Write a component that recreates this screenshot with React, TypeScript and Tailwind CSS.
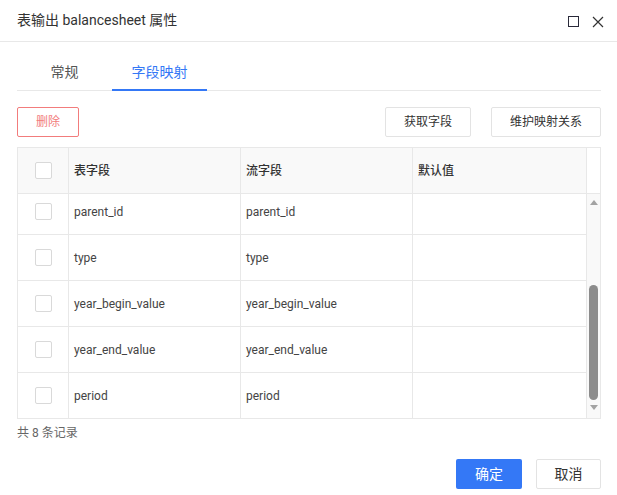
import React from "react";

const rows = [
  { table: "parent_id", stream: "parent_id" },
  { table: "type", stream: "type" },
  { table: "year_begin_value", stream: "year_begin_value" },
  { table: "year_end_value", stream: "year_end_value" },
  { table: "period", stream: "period" },
];

function Checkbox() {
  return <div className="w-[17px] h-[17px] rounded-[2px] border border-[#d9d9d9] bg-white" />;
}

export default function App() {
  return (
    <div
      className="w-[617px] h-[495px] bg-white text-[#333] overflow-hidden"
      style={{ fontFamily: "Roboto, 'Noto Sans CJK SC', sans-serif" }}
    >
      {/* title bar */}
      <div className="h-[42px] border-b border-[#e8e8e8] flex items-center pl-[17px] pr-[13px]">
        <span className="text-[14px] text-[#333]">表输出 balancesheet 属性</span>
        <div className="ml-auto flex items-center gap-[13px] mt-[2px]">
          <div className="w-[11px] h-[11px] border-[1.5px] border-[#2a2a3a]" />
          <svg width="12" height="12" viewBox="0 0 12 12">
            <path d="M1 1L11 11M11 1L1 11" stroke="#333" strokeWidth="1.2" />
          </svg>
        </div>
      </div>

      <div className="px-[17px]">
        {/* tabs */}
        <div className="flex w-[584px] border-b border-[#e8e8e8]">
          <div className="w-[95px] pt-[20px] pb-[8px] leading-[20px] text-[14px] text-center text-[#555]">常规</div>
          <div className="w-[95px] pt-[20px] pb-[7px] leading-[20px] text-[14px] text-center text-[#3478f6] border-b-2 border-[#3478f6] -mb-px">
            字段映射
          </div>
        </div>

        {/* actions */}
        <div className="flex w-[584px] mt-[16px] text-[12px]">
          <button className="h-[30px] px-[18px] border border-[#f27c7c] text-[#f27c7c] rounded-[2px] bg-white">删除</button>
          <button className="ml-auto h-[30px] px-[18px] border border-[#e3e3e3] rounded-[2px] bg-white text-[#333]">获取字段</button>
          <button className="ml-[20px] h-[30px] px-[18px] border border-[#e3e3e3] rounded-[2px] bg-white text-[#333]">维护映射关系</button>
        </div>

        {/* table */}
        <div className="mt-[10px] w-[584px] border border-[#e8e8e8] text-[12px]">
          <div className="flex h-[46px] border-b border-[#e8e8e8]">
            <div className="w-[51px] border-r border-[#e8e8e8] bg-[#f9f9f9] flex items-center justify-center">
              <Checkbox />
            </div>
            <div className="w-[172px] border-r border-[#e8e8e8] bg-[#f9f9f9] flex items-center pl-[5px] font-medium text-[#333]">表字段</div>
            <div className="w-[172px] border-r border-[#e8e8e8] bg-[#f9f9f9] flex items-center pl-[5px] font-medium text-[#333]">流字段</div>
            <div className="w-[174px] border-r border-[#e8e8e8] bg-[#f9f9f9] flex items-center pl-[5px] font-medium text-[#333]">默认值</div>
            <div className="flex-1 bg-white" />
          </div>

          <div className="flex h-[224px]">
            <div className="w-[568px] overflow-hidden">
              <div className="-mt-[5px]">
                {rows.map((r) => (
                  <div key={r.table} className="flex h-[46px] border-b border-[#e8e8e8] text-[#444]">
                    <div className="w-[51px] border-r border-[#e8e8e8] flex items-center justify-center">
                      <Checkbox />
                    </div>
                    <div className="w-[172px] border-r border-[#e8e8e8] flex items-center pl-[5px]">{r.table}</div>
                    <div className="w-[172px] border-r border-[#e8e8e8] flex items-center pl-[5px]">{r.stream}</div>
                    <div className="w-[173px]" />
                  </div>
                ))}
              </div>
            </div>
            <div className="flex-1 border-l border-[#e8e8e8] bg-[#f9f9f9] flex flex-col items-center">
              <svg width="8" height="5" viewBox="0 0 8 5" className="mt-[6px]">
                <path d="M4 0L8 5H0Z" fill="#a3a3a3" />
              </svg>
              <div className="w-[9px] h-[115px] rounded-full bg-[#8c8c8c] mt-[80px]" />
              <svg width="8" height="5" viewBox="0 0 8 5" className="mt-[5px]">
                <path d="M0 0H8L4 5Z" fill="#a3a3a3" />
              </svg>
            </div>
          </div>
        </div>

        <div className="mt-[4px] leading-[20px] text-[12px] text-[#666]">共 8 条记录</div>

        <div className="flex justify-end w-[584px] mt-[16px] text-[14px]">
          <button className="h-[30px] w-[66px] rounded-[2px] bg-[#3478f6] text-white">确定</button>
          <button className="ml-[14px] h-[30px] w-[65px] rounded-[2px] border border-[#e3e3e3] bg-white text-[#333]">取消</button>
        </div>
      </div>
    </div>
  );
}
